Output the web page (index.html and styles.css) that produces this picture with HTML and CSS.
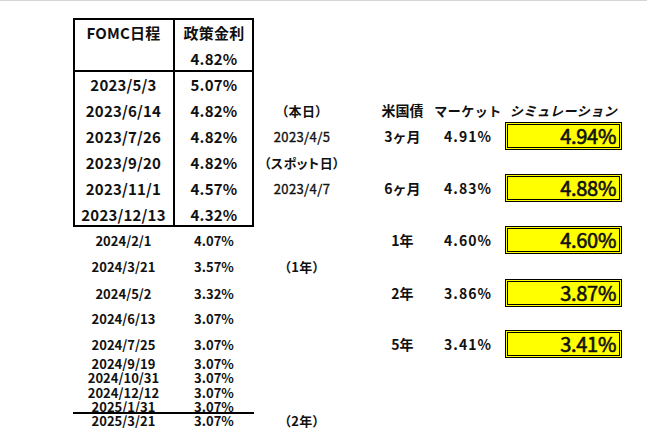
FILE: index.html
```html
<!DOCTYPE html>
<html lang="ja">
<head>
<meta charset="utf-8">
<title>FOMC</title>
<link rel="stylesheet" href="styles.css">
</head>
<body>
<div class="sheet">
  <!-- left table frame -->
  <div class="frame"></div>
  <div class="vdiv"></div>
  <div class="hdiv"></div>
  <div class="uline"></div>

  <div class="cell big r2 c2">FOMC日程</div>
  <div class="cell big r2 c3">政策金利</div>
  <div class="cell big r3 c3">4.82%</div>

  <div class="cell big r4 c2">2023/5/3</div><div class="cell big r4 c3">5.07%</div>
  <div class="cell big r5 c2">2023/6/14</div><div class="cell big r5 c3">4.82%</div>
  <div class="cell big r6 c2">2023/7/26</div><div class="cell big r6 c3">4.82%</div>
  <div class="cell big r7 c2">2023/9/20</div><div class="cell big r7 c3">4.82%</div>
  <div class="cell big r8 c2">2023/11/1</div><div class="cell big r8 c3">4.57%</div>
  <div class="cell big r9 c2">2023/12/13</div><div class="cell big r9 c3">4.32%</div>

  <div class="cell small r10 c2">2024/2/1</div><div class="cell small r10 c3">4.07%</div>
  <div class="cell small r11 c2">2024/3/21</div><div class="cell small r11 c3">3.57%</div>
  <div class="cell small r12 c2">2024/5/2</div><div class="cell small r12 c3">3.32%</div>
  <div class="cell small r13 c2">2024/6/13</div><div class="cell small r13 c3">3.07%</div>
  <div class="cell small r14 c2">2024/7/25</div><div class="cell small r14 c3">3.07%</div>
  <div class="cell small r15 c2">2024/9/19</div><div class="cell small r15 c3">3.07%</div>
  <div class="cell small r16 c2">2024/10/31</div><div class="cell small r16 c3">3.07%</div>
  <div class="cell small r17 c2">2024/12/12</div><div class="cell small r17 c3">3.07%</div>
  <div class="cell small r18 c2">2025/1/31</div><div class="cell small r18 c3">3.07%</div>
  <div class="cell small r19 c2">2025/3/21</div><div class="cell small r19 c3">3.07%</div>

  <!-- middle column -->
  <div class="cell label r5 c4">（本日）</div>
  <div class="cell date r6 c4">2023/4/5</div>
  <div class="cell label r7 c4">（スポット日）</div>
  <div class="cell date r8 c4">2023/4/7</div>
  <div class="cell label r11 c4">（1年）</div>
  <div class="cell label r19 c4">（2年）</div>

  <!-- right section -->
  <div class="cell head r5 c6">米国債</div>
  <div class="cell head kana r5 c7">マーケット</div>
  <div class="cell head kana sim r5 c8">シミュレーション</div>

  <div class="cell term r6 c6">3ヶ月</div><div class="cell mkt r6 c7">4.91%</div>
  <div class="cell r6 c8"><div class="simbox">4.94%</div></div>

  <div class="cell term r8 c6">6ヶ月</div><div class="cell mkt r8 c7">4.83%</div>
  <div class="cell r8 c8"><div class="simbox">4.88%</div></div>

  <div class="cell term r10 c6">1年</div><div class="cell mkt r10 c7">4.60%</div>
  <div class="cell r10 c8"><div class="simbox">4.60%</div></div>

  <div class="cell term r12 c6">2年</div><div class="cell mkt r12 c7">3.86%</div>
  <div class="cell r12 c8"><div class="simbox">3.87%</div></div>

  <div class="cell term r14 c6">5年</div><div class="cell mkt r14 c7">3.41%</div>
  <div class="cell r14 c8"><div class="simbox">3.41%</div></div>
</div>
</body>
</html>
```

FILE: styles.css
```css
html, body {
  margin: 0;
  padding: 0;
  background: #ffffff;
}

body {
  font-family: "Noto Sans CJK JP", "Noto Sans", sans-serif;
  color: #111111;
  overflow: hidden;
}

.sheet {
  display: grid;
  border-top: 1px solid #d4d4d4;
  grid-template-columns: 73px 101px 80px 96px 18px 69px 62px 129px 1fr;
  grid-template-rows: 17px 28px 25px 26px 26px 26px 26px 26px 26px 26px 27px 26px 25px 26px 13px 15px 14px 14px 15px;
  height: 427px;
}

.cell {
  display: flex;
  align-items: center;
  justify-content: center;
  white-space: nowrap;
  line-height: 1;
}

/* placement */
.r2 { grid-row: 2; } .r3 { grid-row: 3; } .r4 { grid-row: 4; }
.r5 { grid-row: 5; } .r6 { grid-row: 6; } .r7 { grid-row: 7; }
.r8 { grid-row: 8; } .r9 { grid-row: 9; } .r10 { grid-row: 10; }
.r11 { grid-row: 11; } .r12 { grid-row: 12; } .r13 { grid-row: 13; }
.r14 { grid-row: 14; } .r15 { grid-row: 15; } .r16 { grid-row: 16; }
.r17 { grid-row: 17; } .r18 { grid-row: 18; } .r19 { grid-row: 19; }
.c2 { grid-column: 2; } .c3 { grid-column: 3; } .c4 { grid-column: 4; }
.c6 { grid-column: 6; } .c7 { grid-column: 7; } .c8 { grid-column: 8; }

/* table lines */
.frame {
  grid-column: 2 / 4;
  grid-row: 2 / 10;
  border: 2px solid #000;
}
.vdiv {
  grid-column: 3;
  grid-row: 2 / 10;
  border-left: 2px solid #000;
  margin-left: -1px;
}
.hdiv {
  grid-column: 2 / 4;
  grid-row: 2 / 4;
  border-bottom: 2px solid #000;
  margin-bottom: -1px;
}
.uline {
  grid-column: 2 / 4;
  grid-row: 19;
  border-top: 2px solid #000;
  margin-top: -1px;
}

/* text styles */
.big {
  font-size: 15px;
  font-weight: 700;
  letter-spacing: 0.2px;
}
.small {
  font-size: 13px;
  font-weight: 700;
}
.label {
  font-size: 13px;
  font-weight: 700;
  font-feature-settings: "palt";
  letter-spacing: 0.5px;
}
.date {
  font-size: 13px;
  font-weight: 400;
  letter-spacing: 0.4px;
  -webkit-text-stroke: 0.35px #111111;
}
.head {
  font-size: 14px;
  font-weight: 700;
}
.kana {
  font-size: 13px;
  letter-spacing: 0.5px;
}
.sim {
  font-style: italic;
}
.term {
  font-size: 14px;
  font-weight: 700;
}
.mkt {
  font-size: 14px;
  font-weight: 700;
  letter-spacing: 1px;
}

.simbox {
  box-sizing: border-box;
  width: 117px;
  height: 28px;
  border: 3px double #000;
  background: #ffff00;
  display: flex;
  align-items: center;
  justify-content: flex-end;
  padding-right: 3px;
  font-size: 20px;
  font-weight: 400;
  letter-spacing: -0.3px;
  line-height: 1;
  -webkit-text-stroke: 0.6px #111111;
}
```
